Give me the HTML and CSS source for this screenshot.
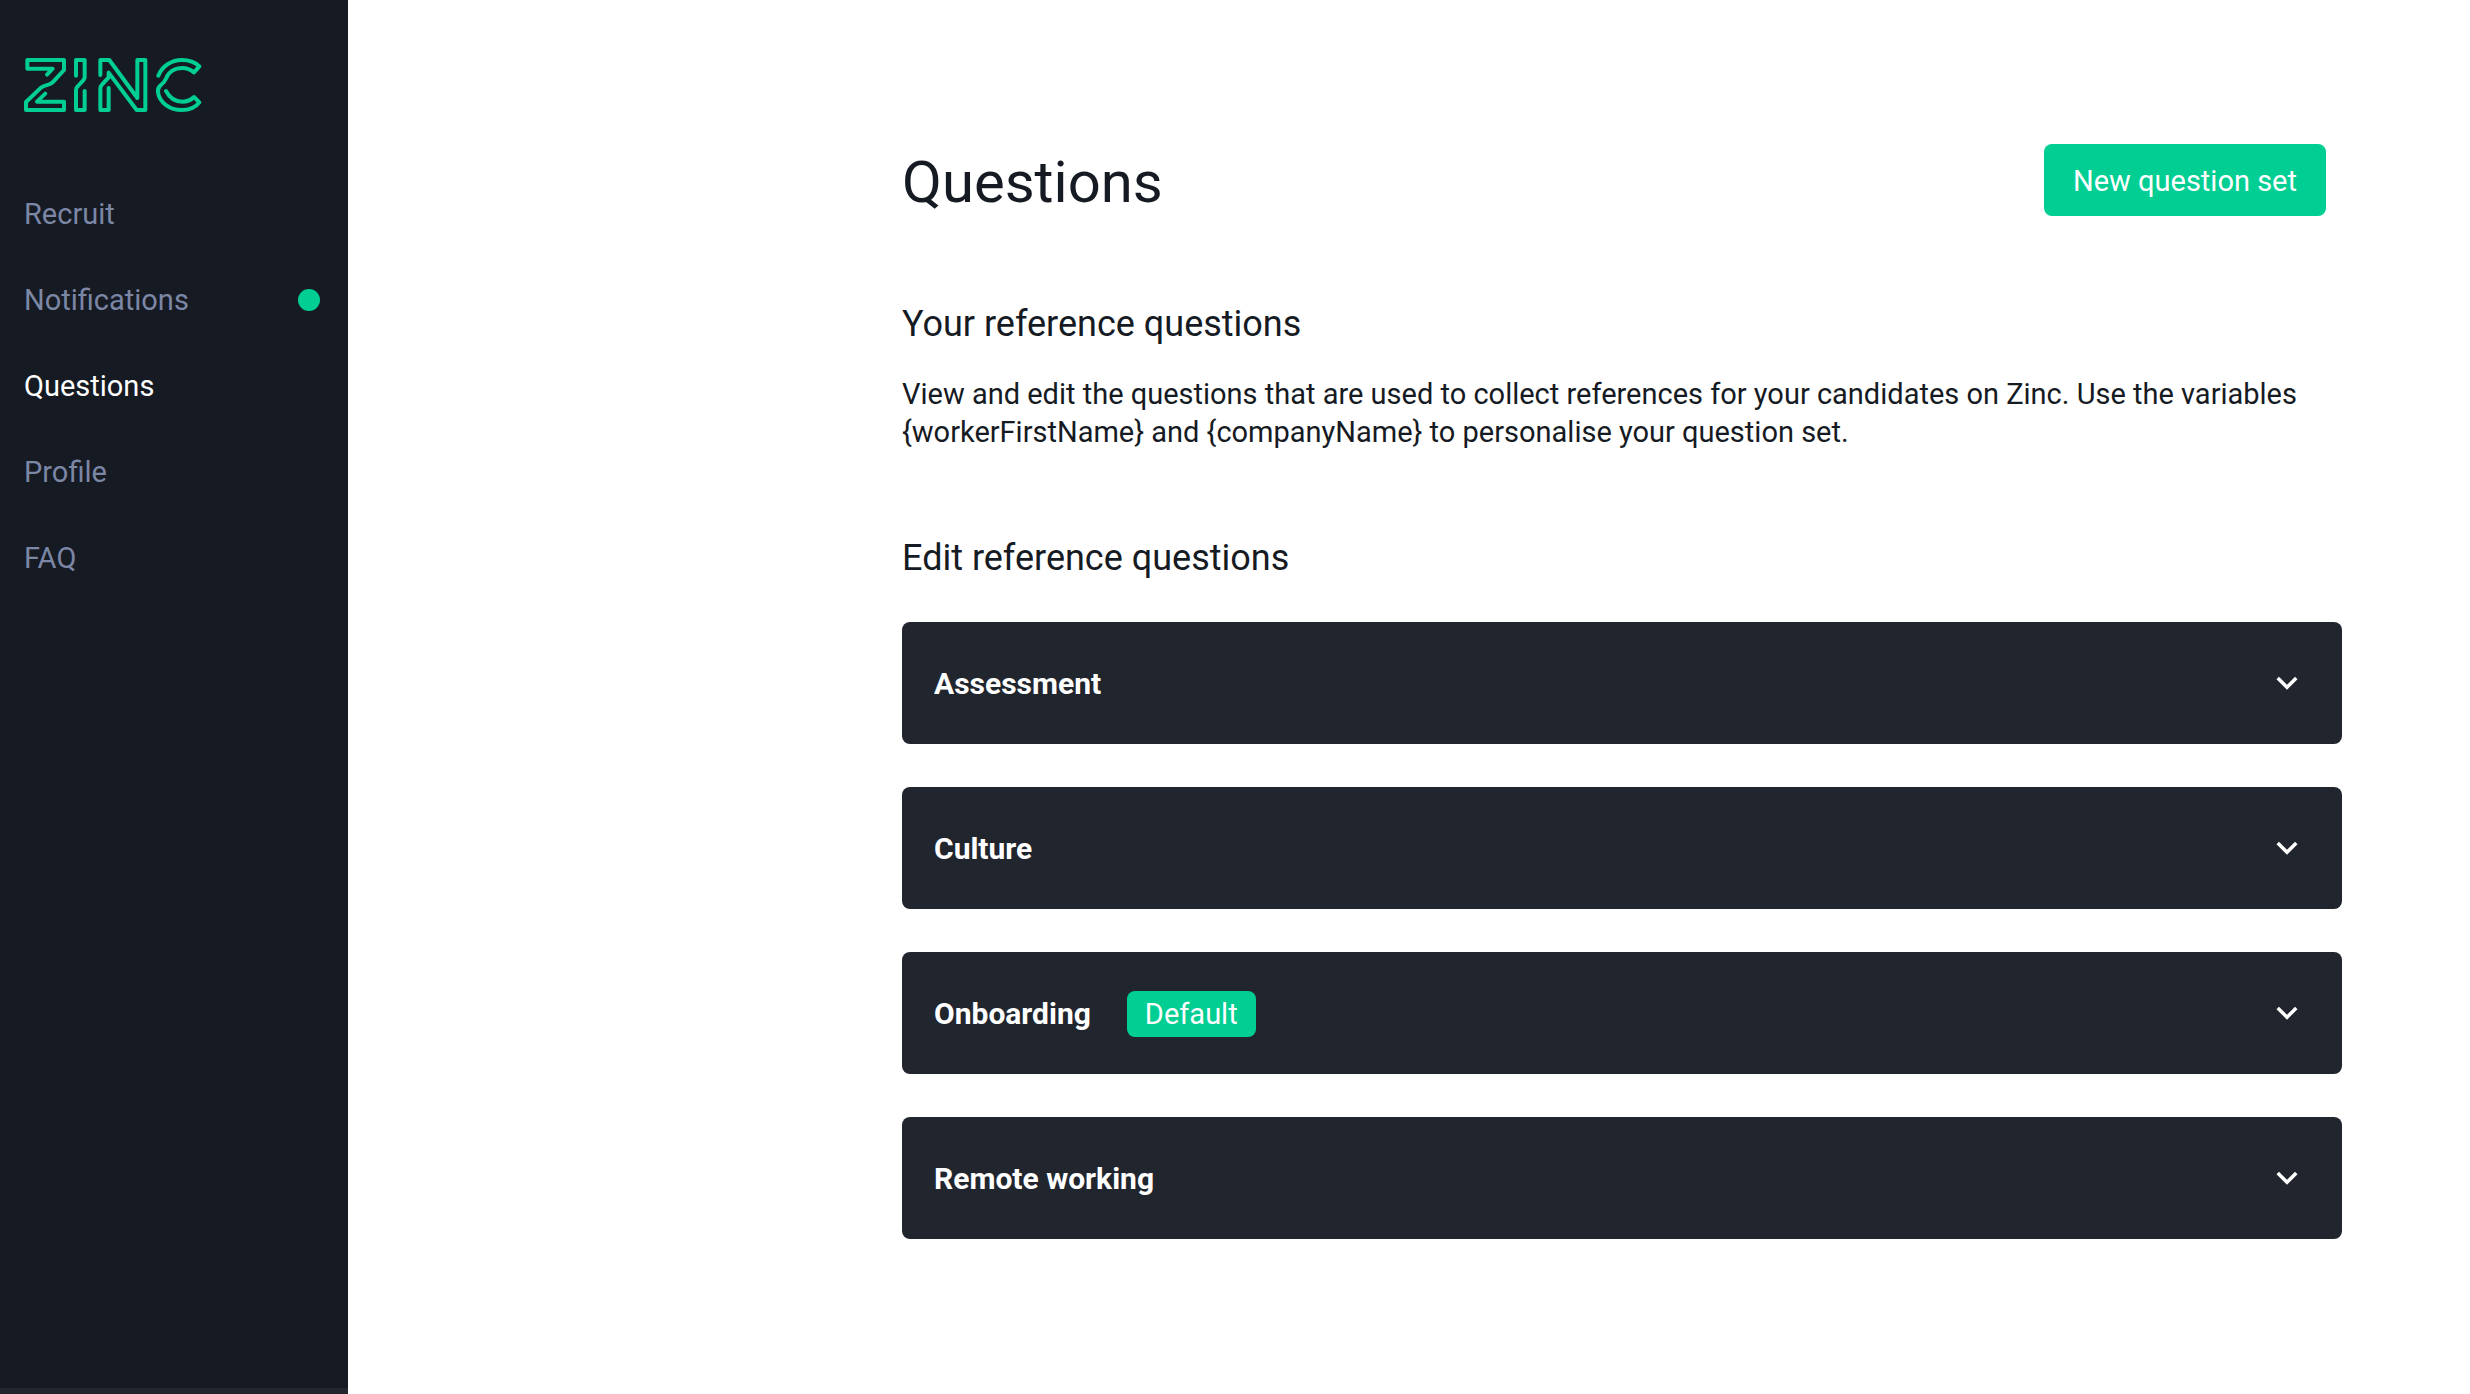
FILE: index.html
```html
<!DOCTYPE html>
<html lang="en">
<head>
<meta charset="utf-8">
<meta name="viewport" content="width=device-width, initial-scale=1">
<title>Questions – Zinc</title>
<link rel="stylesheet" href="styles.css">
</head>
<body>
<div class="app">
  <aside class="sidebar">
    <a class="logo" href="#" aria-label="Zinc">
      <svg viewBox="72 51 534 168" width="178" height="56" fill="none" stroke="currentColor" stroke-width="12" stroke-linecap="round" stroke-linejoin="round" aria-hidden="true">
        <path d="M141 104L158 86H82V60H192V90L160 125Q154 132 145 134Q131 138 123 143L78 186V210H192V185H111L136 161"/>
        <path d="M228 107V60H254V112Q253 118 249 122L234 138Q228 144 228 150V210H254V153"/>
        <path d="M301 105V60H328L412 174V60H436V210H410L326 98V112L306 134Q301 139 301 146V210H326V144"/>
        <path d="M475 107C487 76 517 60 545 60C566 60 586 67 598 79L582 97C571 88 559 84 547 84C524 84 506 96 499 114C494 125 491 129 484 134Q472 143 474 157C478 188 510 210 545 210C568 210 587 202 598 187L582 171C572 181 560 185 547 185C524 185 508 172 498 153"/>
      </svg>
    </a>
    <nav class="nav" aria-label="Main">
      <a class="nav-link" href="#">Recruit</a>
      <a class="nav-link" href="#">Notifications <span class="dot"></span></a>
      <a class="nav-link active" href="#" aria-current="page">Questions</a>
      <a class="nav-link" href="#">Profile</a>
      <a class="nav-link" href="#">FAQ</a>
    </nav>
  </aside>
  <main class="main">
    <div class="content">
      <header class="page-header">
        <h1 class="page-title">Questions</h1>
        <button class="primary" type="button">New question set</button>
      </header>
      <section class="intro">
        <h2 class="section-title">Your reference questions</h2>
        <p class="text">View and edit the questions that are used to collect references for your candidates on Zinc. Use the variables {workerFirstName} and {companyName} to personalise your question set.</p>
      </section>
      <section class="sets">
        <h2 class="section-title">Edit reference questions</h2>
        <div class="set-list">
          <button class="set" type="button" aria-expanded="false">
            <span class="set-name">Assessment</span>
            <svg class="chevron" viewBox="0 0 24 24" aria-hidden="true"><path d="M7.41 7.84L12 12.42l4.59-4.58L18 9.25l-6 6-6-6z"/></svg>
          </button>
          <button class="set" type="button" aria-expanded="false">
            <span class="set-name">Culture</span>
            <svg class="chevron" viewBox="0 0 24 24" aria-hidden="true"><path d="M7.41 7.84L12 12.42l4.59-4.58L18 9.25l-6 6-6-6z"/></svg>
          </button>
          <button class="set" type="button" aria-expanded="false">
            <span class="set-name">Onboarding</span>
            <span class="badge">Default</span>
            <svg class="chevron" viewBox="0 0 24 24" aria-hidden="true"><path d="M7.41 7.84L12 12.42l4.59-4.58L18 9.25l-6 6-6-6z"/></svg>
          </button>
          <button class="set" type="button" aria-expanded="false">
            <span class="set-name">Remote working</span>
            <svg class="chevron" viewBox="0 0 24 24" aria-hidden="true"><path d="M7.41 7.84L12 12.42l4.59-4.58L18 9.25l-6 6-6-6z"/></svg>
          </button>
        </div>
      </section>
    </div>
  </main>
</div>
</body>
</html>
```
FILE: styles.css
```css
:root {
  --ink: #151a23;
  --card: #21252e;
  --green: #00ce92;
  --muted: #7c86a5;
}

* {
  box-sizing: border-box;
  margin: 0;
}

body {
  background: #fff;
  color: var(--ink);
  font: 400 29px/38px Roboto, "Liberation Sans", sans-serif;
}

button {
  border: 0;
  border-radius: 8px;
  color: #fff;
  font: inherit;
  cursor: pointer;
}

.app {
  display: flex;
  min-height: 100vh;
}

.sidebar {
  flex: 0 0 348px;
  padding-top: 57px;
  background: var(--ink);
  border-bottom: 6px solid var(--card);
}

.logo {
  display: block;
  padding: 0 24px;
  margin-bottom: 58px;
  color: var(--green);
}

.logo svg {
  display: block;
}

.nav {
  display: flex;
  flex-direction: column;
}

.nav-link {
  display: flex;
  align-items: center;
  justify-content: space-between;
  padding: 24px 28px 24px 24px;
  color: var(--muted);
  text-decoration: none;
}

.nav-link.active {
  color: #fff;
}

.dot {
  width: 22px;
  height: 22px;
  border-radius: 50%;
  background: var(--green);
}

.main {
  flex: 1;
  min-width: 0;
  padding: 144px 128px 64px 48px;
}

.content {
  max-width: 1440px;
  margin-left: auto;
}

.page-header {
  display: flex;
  align-items: flex-start;
  justify-content: space-between;
  padding-right: 16px;
  margin-bottom: 82px;
}

.page-title {
  font-size: 58px;
  font-weight: 400;
  line-height: 76px;
}

.primary {
  min-width: 282px;
  padding: 18px 24px 16px;
  background: var(--green);
}

.section-title {
  font-size: 36px;
  font-weight: 400;
  line-height: 44px;
}

.text {
  margin-top: 29px;
}

.sets {
  margin-top: 85px;
}

.set-list {
  display: flex;
  flex-direction: column;
  gap: 43px;
  margin-top: 42px;
}

.set {
  display: flex;
  align-items: center;
  width: 100%;
  min-height: 122px;
  padding: 25px 34px 23px 32px;
  background: var(--card);
  text-align: left;
}

.set-name {
  font-size: 30px;
  font-weight: 700;
}

.badge {
  margin-left: 36px;
  padding: 4px 18px;
  border-radius: 8px;
  background: var(--green);
}

.chevron {
  width: 42px;
  height: 42px;
  margin-left: auto;
  fill: #fff;
}
```
